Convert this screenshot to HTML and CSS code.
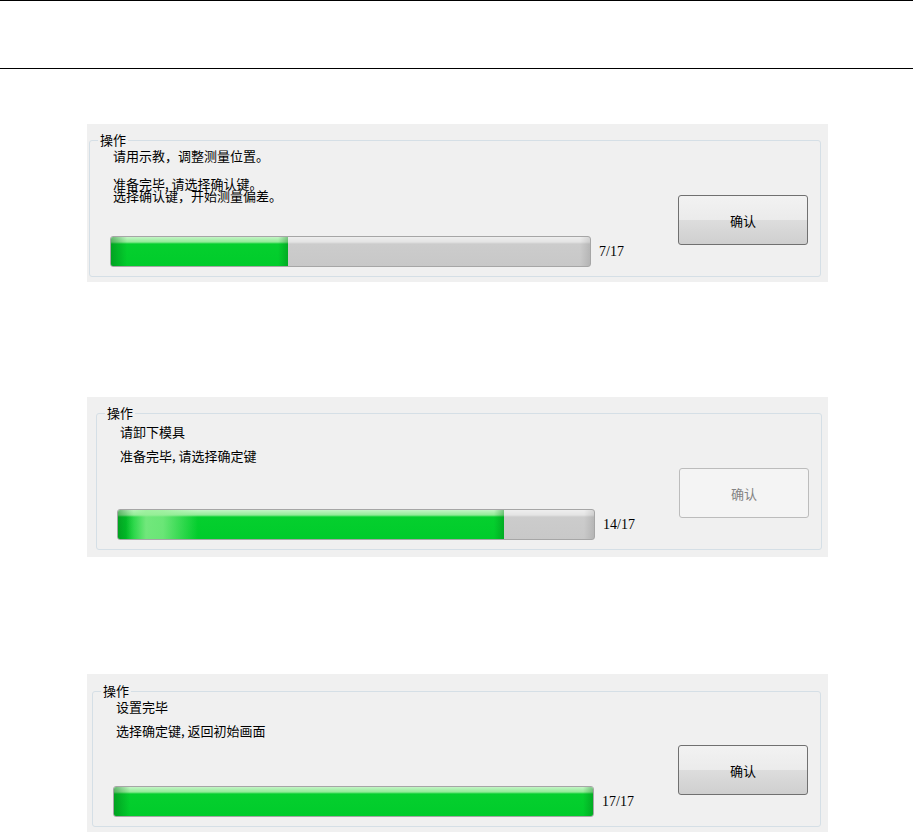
FILE: index.html
```html
<!DOCTYPE html>
<html lang="zh-CN">
<head>
<meta charset="utf-8">
<title>操作</title>
<link rel="stylesheet" href="styles.css">
</head>
<body>
<header class="topbar"></header>
<main class="stack">
  <section class="panel p1">
    <fieldset class="group">
      <legend>操作</legend>
      <div class="content">
        <div class="info">
          <p class="line">请用示教，调整测量位置。</p>
          <p class="line gap-lg">准备完毕, 请选择确认键。</p>
          <p class="line overlap">选择确认键，开始测量偏差。</p>
          <div class="progress-row">
            <div class="bar"><div class="fill" style="width:37%"></div></div>
            <span class="count">7/17</span>
          </div>
        </div>
        <button class="btn">确认</button>
      </div>
    </fieldset>
  </section>

  <section class="panel p2">
    <fieldset class="group">
      <legend>操作</legend>
      <div class="content">
        <div class="info">
          <p class="line first-shift">请卸下模具</p>
          <p class="line gap-sm">准备完毕, 请选择确定键</p>
          <div class="progress-row">
            <div class="bar narrow"><div class="fill shine" style="width:81%"></div></div>
            <span class="count">14/17</span>
          </div>
        </div>
        <button class="btn" disabled>确认</button>
      </div>
    </fieldset>
  </section>

  <section class="panel p3">
    <fieldset class="group">
      <legend>操作</legend>
      <div class="content">
        <div class="info">
          <p class="line">设置完毕</p>
          <p class="line gap-sm">选择确定键, 返回初始画面</p>
          <div class="progress-row">
            <div class="bar"><div class="fill" style="width:100%"></div></div>
            <span class="count">17/17</span>
          </div>
        </div>
        <button class="btn">确认</button>
      </div>
    </fieldset>
  </section>
</main>
</body>
</html>
```
FILE: styles.css
```css
* { box-sizing: border-box; }

html, body {
  margin: 0;
  padding: 0;
  background: #ffffff;
}

body {
  font-family: "Noto Sans CJK SC", "Noto Sans", sans-serif;
  font-size: 13px;
  color: #000;
  width: 913px;
  height: 833px;
  overflow: hidden;
}

.topbar {
  height: 69px;
  border-top: 1px solid #000;
  border-bottom: 1px solid #000;
}

.stack {
  padding-left: 87px;
  display: flex;
  flex-direction: column;
}

.panel {
  width: 741px;
  background: #f0f0f0;
  display: flex;
}

.p1 { margin-top: 55px; padding: 9px 7px 5px 2px; }
.p2 { margin-top: 115px; padding: 9px 6px 7px 9px; }
.p3 { margin-top: 117px; padding: 10px 7px 5px 5px; }

.group {
  flex: 1;
  margin: 0;
  min-width: 0;
  border: 1px solid #d5dfe6;
  border-radius: 3px;
  padding: 0 12px 9px 20px;
}

.group legend {
  margin-left: -12px;
  padding: 0 2px;
  line-height: 14px;
  font-size: 13px;
}

.content {
  height: 120px;
  display: flex;
}

.p3 .content { height: 119px; }

.info {
  flex: 1;
  display: flex;
  flex-direction: column;
}

.line {
  margin: 0 0 0 3px;
  line-height: 18px;
  white-space: nowrap;
}

.first-shift { margin-top: 3px; }
.gap-lg { margin-top: 10px; }
.gap-sm { margin-top: 6px; }
.overlap { margin-top: -6px; }

.progress-row {
  margin-top: auto;
  display: flex;
  align-items: center;
}

.bar {
  width: 481px;
  height: 31px;
  border: 1px solid #a6a6a6;
  border-radius: 3px;
  overflow: hidden;
  background:
    linear-gradient(to right, rgba(0,0,0,0) calc(100% - 10px), rgba(0,0,0,0.10) 100%),
    linear-gradient(to bottom, #eeeeee 0, #e4e4e4 5px, #cccccc 7px, #c8c8c8 100%);
}

.bar.narrow { width: 478px; }

.fill {
  height: 100%;
  background:
    linear-gradient(to right, rgba(0,110,20,0.45) 0, rgba(0,110,20,0) 16px, rgba(0,110,20,0) calc(100% - 10px), rgba(0,110,20,0.35) 100%),
    linear-gradient(to bottom, #c4f5c6 0, #93eb98 5px, #05cf2e 7px, #00cc2b 100%);
}

.fill.shine {
  background:
    linear-gradient(to right, rgba(150,240,150,0) 8px, rgba(150,240,150,0.75) 28px, rgba(150,240,150,0.7) 45px, rgba(150,240,150,0) 80px),
    linear-gradient(to right, rgba(0,110,20,0.45) 0, rgba(0,110,20,0) 16px, rgba(0,110,20,0) calc(100% - 10px), rgba(0,110,20,0.35) 100%),
    linear-gradient(to bottom, #c4f5c6 0, #93eb98 5px, #05cf2e 7px, #00cc2b 100%);
}

.count {
  margin-left: 8px;
  font-family: "Liberation Serif", serif;
  font-size: 14px;
}

.btn {
  align-self: flex-end;
  margin-bottom: 22px;
  width: 130px;
  height: 50px;
  border: 1px solid #707070;
  border-radius: 3px;
  background: linear-gradient(to bottom, #f2f2f2 0, #ebebeb 50%, #dddddd 50%, #cfcfcf 100%);
  font-family: "Noto Sans CJK SC", sans-serif;
  font-size: 13px;
  color: #000;
  padding: 0;
}

.btn:disabled {
  border-color: #bcbcbc;
  background: #f4f4f4;
  color: #838383;
}
```
